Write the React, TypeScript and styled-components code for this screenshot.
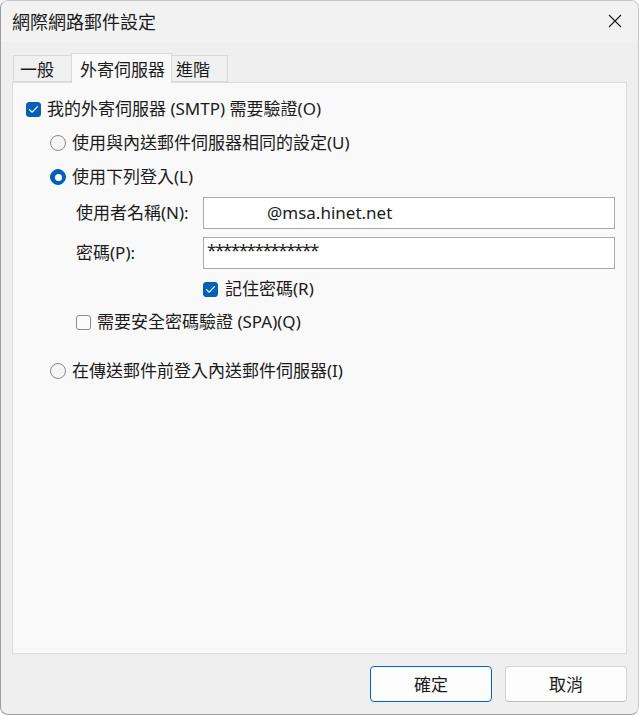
import React from "react";
import styled, { createGlobalStyle } from "styled-components";

const GlobalStyle = createGlobalStyle`
  html, body {
    margin: 0;
    padding: 0;
    background: #ffffff;
  }
  body {
    font-family: "Noto Sans", "Noto Sans CJK TC", sans-serif;
    color: #1b1b1b;
  }
  * {
    box-sizing: border-box;
  }
`;

const Window = styled.div`
  width: 639px;
  height: 715px;
  display: flex;
  flex-direction: column;
  background: #efefef;
  border: 1px solid #9c9c9c;
  border-top-color: #c8c8c8;
  border-right-color: #c8c8c8;
  border-radius: 8px;
  overflow: hidden;
`;

const TitleBar = styled.div`
  height: 41px;
  display: flex;
  align-items: center;
  justify-content: space-between;
  padding: 0 16px 2px 11px;
  background: #f2f2f2;
`;

const Title = styled.span`
  font-family: "Noto Sans CJK TC", sans-serif;
  font-size: 18px;
  line-height: 22px;
  color: #1b1b1b;
`;

const CloseButton = styled.div`
  width: 14px;
  height: 14px;
  display: flex;
  align-items: center;
  justify-content: center;
`;

const TabRow = styled.div`
  display: flex;
  align-items: flex-end;
  height: 29px;
  margin: 11px 11px 0;
  padding-left: 1px;
`;

const Tab = styled.div<{ $active?: boolean; $w: number; $pl: number }>`
  width: ${(p) => p.$w}px;
  height: ${(p) => (p.$active ? 30 : 27)}px;
  padding-left: ${(p) => p.$pl}px;
  display: flex;
  align-items: center;
  font-size: 17px;
  line-height: 20px;
  font-family: "Noto Sans CJK TC", sans-serif;
  background: ${(p) => (p.$active ? "#f9f9f9" : "#f0f0f0")};
  border: 1px solid #d9d9d9;
  border-bottom: ${(p) => (p.$active ? "none" : "1px solid #d9d9d9")};
  margin-bottom: ${(p) => (p.$active ? -1 : 0)}px;
  position: relative;
  z-index: ${(p) => (p.$active ? 1 : 0)};
  & + & {
    margin-left: -1px;
  }
`;

const Panel = styled.div`
  flex: 1;
  margin: 0 11px;
  background: #f9f9f9;
  border: 1px solid #dcdcdc;
  padding: 9px 0 0 13px;
  display: flex;
  flex-direction: column;
`;

const Row = styled.div<{ $h?: number; $indent?: number; $mt?: number }>`
  height: ${(p) => p.$h ?? 34}px;
  margin-left: ${(p) => p.$indent ?? 0}px;
  margin-top: ${(p) => p.$mt ?? 0}px;
  display: flex;
  align-items: center;
`;

const Label = styled.span<{ $gap?: number }>`
  margin-left: ${(p) => p.$gap ?? 6}px;
  font-size: 17px;
  line-height: 20px;
  white-space: nowrap;
`;

const CheckBox = styled.span<{ $checked?: boolean }>`
  width: 15px;
  height: 15px;
  flex: none;
  border-radius: 3px;
  display: flex;
  align-items: center;
  justify-content: center;
  background: ${(p) => (p.$checked ? "#005fb8" : "#fbfbfb")};
  border: 1px solid ${(p) => (p.$checked ? "#005fb8" : "#8a8a8a")};
`;

const Radio = styled.span<{ $checked?: boolean }>`
  width: 16px;
  height: 16px;
  flex: none;
  border-radius: 50%;
  display: flex;
  align-items: center;
  justify-content: center;
  background: ${(p) => (p.$checked ? "#005fb8" : "#f5f5f5")};
  border: 1px solid ${(p) => (p.$checked ? "#005fb8" : "#8a8a8a")};
  &::after {
    content: "";
    display: ${(p) => (p.$checked ? "block" : "none")};
    width: 7px;
    height: 7px;
    border-radius: 50%;
    background: #ffffff;
  }
`;

const LoginGrid = styled.div`
  display: grid;
  grid-template-columns: 127px 412px;
  row-gap: 8px;
  margin: 3px 0 0 50px;
  align-items: center;
`;

const FieldLabel = styled.span`
  font-size: 17px;
  line-height: 20px;
  white-space: nowrap;
`;

const Field = styled.div<{ $top?: boolean }>`
  height: 32px;
  background: #ffffff;
  border: 1px solid #a9a9a9;
  display: flex;
  align-items: ${(p) => (p.$top ? "flex-start" : "center")};
  padding: ${(p) => (p.$top ? "2px 0 0 3px" : "0 0 0 63px")};
  font-size: 17px;
  line-height: 20px;
  color: #1b1b1b;
`;

const Mask = styled.span`
  font-family: "Noto Sans", sans-serif;
  font-size: 17px;
  letter-spacing: -1.45px;
  line-height: 20px;
`;

const Footer = styled.div`
  display: flex;
  justify-content: flex-end;
  gap: 13px;
  padding: 12px 11px 12px;
`;

const Button = styled.div<{ $primary?: boolean }>`
  width: 122px;
  height: 36px;
  display: flex;
  align-items: center;
  justify-content: center;
  background: #fdfdfd;
  border: 1px solid ${(p) => (p.$primary ? "#0067c0" : "#d3d3d3")};
  border-bottom-color: ${(p) => (p.$primary ? "#0067c0" : "#bdbdbd")};
  border-radius: 4px;
  font-family: "Noto Sans CJK TC", sans-serif;
  font-size: 17px;
  line-height: 20px;
  color: #1b1b1b;
`;

const Check = () => (
  <svg width="11" height="9" viewBox="0 0 11 9">
    <path
      d="M1.5 4.6 L4.2 7.2 L9.5 1.6"
      fill="none"
      stroke="#ffffff"
      strokeWidth="1.2"
      strokeLinecap="round"
      strokeLinejoin="round"
    />
  </svg>
);

const App: React.FC = () => {
  return (
    <>
      <GlobalStyle />
      <Window>
        <TitleBar>
          <Title>網際網路郵件設定</Title>
          <CloseButton>
            <svg width="14" height="14" viewBox="0 0 14 14">
              <path d="M1 1 L13 13 M13 1 L1 13" stroke="#1b1b1b" strokeWidth="1.1" />
            </svg>
          </CloseButton>
        </TitleBar>

        <TabRow>
          <Tab $w={59} $pl={6}>一般</Tab>
          <Tab $w={101} $pl={8} $active>
            外寄伺服器
          </Tab>
          <Tab $w={57} $pl={4}>進階</Tab>
        </TabRow>

        <Panel>
          <Row>
            <CheckBox $checked>
              <Check />
            </CheckBox>
            <Label>我的外寄伺服器 (SMTP) 需要驗證(O)</Label>
          </Row>
          <Row $indent={24}>
            <Radio />
            <Label $gap={6}>使用與內送郵件伺服器相同的設定(U)</Label>
          </Row>
          <Row $indent={24}>
            <Radio $checked />
            <Label $gap={6}>使用下列登入(L)</Label>
          </Row>

          <LoginGrid>
            <FieldLabel>使用者名稱(N):</FieldLabel>
            <Field>@msa.hinet.net</Field>
            <FieldLabel>密碼(P):</FieldLabel>
            <Field $top>
              <Mask>**************</Mask>
            </Field>
          </LoginGrid>

          <Row $h={32} $mt={4} $indent={177}>
            <CheckBox $checked>
              <Check />
            </CheckBox>
            <Label $gap={7}>記住密碼(R)</Label>
          </Row>
          <Row $indent={50}>
            <CheckBox />
            <Label>需要安全密碼驗證 (SPA)(Q)</Label>
          </Row>
          <Row $indent={24} $mt={15}>
            <Radio />
            <Label $gap={6}>在傳送郵件前登入內送郵件伺服器(I)</Label>
          </Row>
        </Panel>

        <Footer>
          <Button $primary>確定</Button>
          <Button>取消</Button>
        </Footer>
      </Window>
    </>
  );
};

export default App;
